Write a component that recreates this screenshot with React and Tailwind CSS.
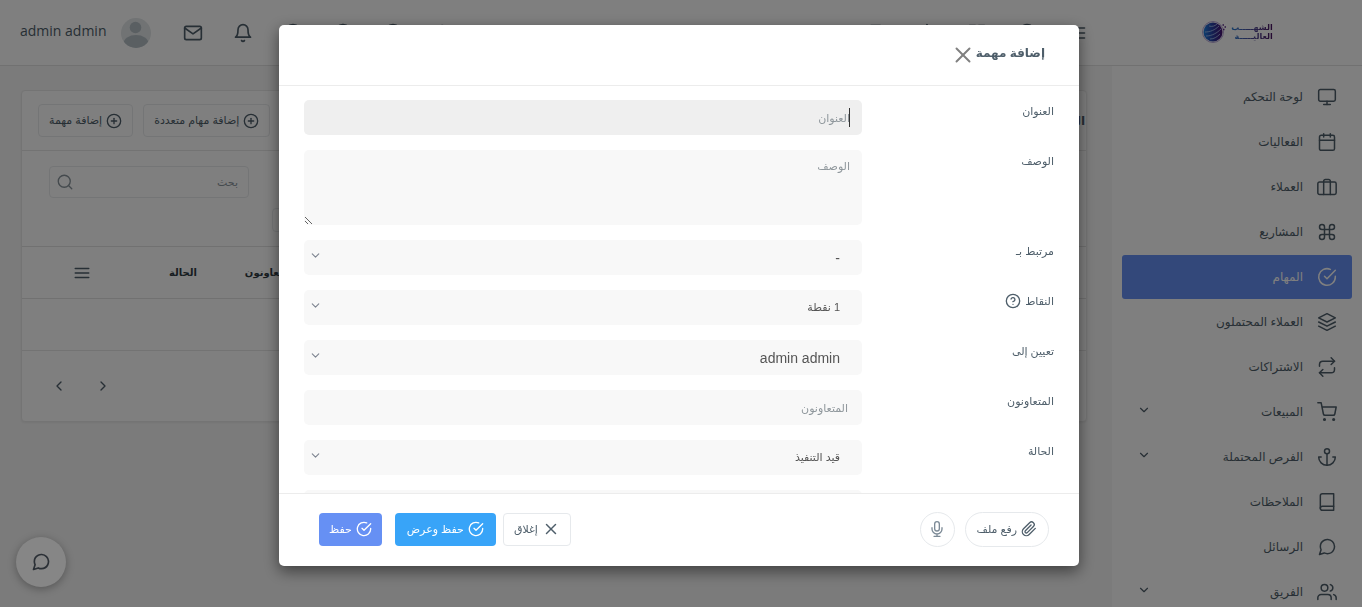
import {
  FiAnchor, FiBell, FiBook, FiCalendar, FiCheckCircle, FiCheckSquare, FiChevronDown, FiChevronLeft,
  FiChevronRight, FiClock, FiCommand, FiGlobe, FiGrid, FiHelpCircle, FiLayers, FiMail, FiMenu,
  FiMessageCircle, FiMonitor, FiPaperclip, FiPlusCircle, FiRepeat, FiSearch, FiShoppingCart,
  FiStar, FiUsers, FiX,
} from "react-icons/fi";

const navItems = [
  { label: "لوحة التحكم", icon: FiMonitor },
  { label: "الفعاليات", icon: FiCalendar },
  { label: "العملاء", icon: BriefcaseIcon },
  { label: "المشاريع", icon: FiCommand },
  { label: "المهام", icon: FiCheckCircle, active: true },
  { label: "العملاء المحتملون", icon: FiLayers },
  { label: "الاشتراكات", icon: FiRepeat },
  { label: "المبيعات", icon: FiShoppingCart, expandable: true },
  { label: "الفرص المحتملة", icon: FiAnchor, expandable: true },
  { label: "الملاحظات", icon: FiBook },
  { label: "الرسائل", icon: FiMessageCircle },
  { label: "الفريق", icon: FiUsers, expandable: true },
];

function BriefcaseIcon({ size = 20, strokeWidth = 2 }) {
  return (
    <svg width={size} height={size} viewBox="0 0 24 24" fill="none" stroke="currentColor" strokeWidth={strokeWidth} strokeLinecap="round" strokeLinejoin="round">
      <rect x="1" y="6" width="22" height="15" rx="2" />
      <path d="M16 21V5a2 2 0 0 0-2-2h-4a2 2 0 0 0-2 2v16" />
    </svg>
  );
}

function MicIcon() {
  return (
    <svg width="16" height="16" viewBox="0 0 24 24" fill="none" stroke="currentColor" strokeWidth="2" strokeLinecap="round" strokeLinejoin="round">
      <rect x="8.5" y="1" width="7" height="14" rx="3.5" />
      <path d="M4.500 10v2a7.500 7.500 0 0 0 15 0v-2M12 19.500V23M7.500 23h9" />
    </svg>
  );
}

function Avatar() {
  return (
    <svg width="30" height="30" viewBox="0 0 30 30">
      <defs>
        <clipPath id="avatar-clip"><circle cx="15" cy="15" r="15" /></clipPath>
      </defs>
      <g clipPath="url(#avatar-clip)">
        <rect width="30" height="30" fill="#e2e6e8" />
        <circle cx="14.500" cy="9.500" r="5.800" fill="#b4bec5" />
        <ellipse cx="15" cy="25.500" rx="12.500" ry="8.500" fill="#b4bec5" />
      </g>
    </svg>
  );
}

function Logo() {
  return (
    <a href="#" className="flex items-center gap-1" aria-label="الشهب العالية">
      <span className="flex flex-col bg-gradient-to-l from-[#4a1060] to-[#1f7ad0] bg-clip-text text-[8px] leading-[9px] font-bold text-transparent">
        <span>الشهـــــب</span>
        <span>العاليـــــة</span>
      </span>
      <svg width="26" height="24" viewBox="0 0 26 24">
        <defs>
          <linearGradient id="globe" x1="0" x2="1">
            <stop offset="0" stopColor="#1d7fe0" />
            <stop offset="0.500" stopColor="#2a3ca0" />
            <stop offset="1" stopColor="#4a1070" />
          </linearGradient>
        </defs>
        <circle cx="12" cy="12" r="10.500" fill="none" stroke="#b9a9d8" strokeWidth="1" />
        <circle cx="12" cy="12" r="9.500" fill="url(#globe)" />
        <path d="M4 12c5 0 10-2 14-6M5 16c6 0 11-3 15-7M8 6c3 1 6 0 8-2M9 19c4 0 7-2 10-5" stroke="#a9c4ee" strokeWidth="0.800" fill="none" />
        <path d="M21.500 5h1.500M23.500 7h1.500M22 9.500h1.500" stroke="#5b2b88" strokeWidth="1.500" fill="none" />
      </svg>
    </a>
  );
}

function IconButton({ icon: Icon, label }) {
  return (
    <button type="button" aria-label={label} className="flex w-[50px] justify-center">
      <Icon size={20} />
    </button>
  );
}

function TopBar() {
  return (
    <header className="flex h-[66px] shrink-0 items-center justify-between border-b border-[#e2e2e2] bg-white text-[#4e5e6a]">
      <div className="flex items-center">
        <div className="flex w-[250px] justify-center pb-0.5"><Logo /></div>
        <div className="flex pr-2.5">
          <IconButton icon={FiMenu} label="القائمة" />
          <IconButton icon={FiCheckCircle} label="المهام" />
          <IconButton icon={FiGrid} label="المشاريع" />
          <IconButton icon={FiStar} label="المفضلة" />
          <IconButton icon={FiCheckSquare} label="قائمة المهام" />
        </div>
      </div>
      <div className="flex items-center">
        <IconButton icon={FiSearch} label="بحث" />
        <IconButton icon={FiPlusCircle} label="إضافة" />
        <IconButton icon={FiGlobe} label="اللغة" />
        <IconButton icon={FiClock} label="الوقت" />
        <IconButton icon={FiBell} label="التنبيهات" />
        <IconButton icon={FiMail} label="البريد" />
        <a href="#" className="flex items-center gap-3.5 pr-[17px] pl-5 text-sm">
          <Avatar />
          <span className="pb-1 font-['Open_Sans',sans-serif]">admin admin</span>
        </a>
      </div>
    </header>
  );
}

function Sidebar() {
  return (
    <nav className="flex w-[250px] shrink-0 flex-col gap-px bg-white px-2.5 pt-[9px] text-[#4e5e6a]">
      {navItems.map(({ label, icon: Icon, active, expandable }) => (
        <a
          key={label}
          href="#"
          className={`flex h-11 shrink-0 items-center gap-3.5 rounded-[3px] px-[15px] text-xs ${active ? "bg-[#6690f4] text-white" : ""}`}
        >
          <Icon size={20} strokeWidth={1.8} />
          <span className="flex-1">{label}</span>
          {expandable && <span className="pb-1"><FiChevronDown size={14} /></span>}
        </a>
      ))}
    </nav>
  );
}

function AddButton({ children }) {
  return (
    <button type="button" className="flex h-[33px] items-center gap-1 rounded border border-[#e9ebed] px-2.5 text-[11px]">
      <FiPlusCircle size={16} />
      {children}
    </button>
  );
}

function TasksCard() {
  return (
    <section className="mt-6 mr-[25px] ml-[21px] rounded border border-[#e9e9e9] bg-white text-[#4e5e6a] shadow-xs">
      <div className="flex h-[60px] items-center justify-between border-b border-[#e6e6e6] pr-px pl-4">
        <h1 className="text-xs font-bold">المهام</h1>
        <div className="flex gap-2.5">
          <AddButton>إضافة مهام متعددة</AddButton>
          <AddButton>إضافة مهمة</AddButton>
        </div>
      </div>
      <div className="flex h-[95px] flex-col items-end gap-2.5 pt-[15px] pl-[27px]">
        <label className="flex h-8 w-[200px] items-center rounded border border-[#e9ebed] pr-2.5 pl-1.5">
          <input type="search" placeholder="بحث" className="w-full min-w-0 bg-transparent text-[11px] outline-none placeholder:text-[#8a959c]" />
          <span className="text-[#8a959c]"><FiSearch size={18} strokeWidth={1.8} /></span>
        </label>
        <div className="ml-[223px] h-6 w-40 rounded-sm border border-[#e9ebed]" />
      </div>
      <table className="w-full table-fixed text-right text-[10px]">
        <thead>
          <tr className="h-[52px] border-y border-[#e2e2e2] text-[#2f3a42]">
            <th className="w-auto" />
            <th className="w-[100px]">المتعاونون</th>
            <th className="w-[55px]">الحالة</th>
            <th className="w-[120px] text-[#4e5e6a]">
              <span className="flex justify-center"><FiMenu size={18} /></span>
            </th>
          </tr>
        </thead>
        <tbody>
          <tr className="h-[52px] border-b border-[#e6e6e6]"><td colSpan={4} /></tr>
        </tbody>
      </table>
      <div className="flex h-[70px] items-center justify-end gap-7 pl-[29px]">
        <button type="button" aria-label="السابق"><FiChevronRight size={16} /></button>
        <button type="button" aria-label="التالي"><FiChevronLeft size={16} /></button>
      </div>
    </section>
  );
}

const fieldClass = "block w-full rounded-[5px] bg-[#f8f8f8] outline-none placeholder:text-[#8f979c]";

function Field({ id, label, help, children }) {
  return (
    <div className="flex">
      <label htmlFor={id} className="flex h-[22px] w-48 shrink-0 items-center gap-1 text-[11px]">
        {label}
        {help && <FiHelpCircle size={16} />}
      </label>
      <div className="relative min-w-0 flex-1">{children}</div>
    </div>
  );
}

function SelectField({ id, label, help, option, textSize = "text-sm" }) {
  return (
    <Field id={id} label={label} help={help}>
      <select id={id} className={`${fieldClass} h-[35px] appearance-none pr-[22px] pl-8 ${textSize} text-[#555]`}>
        <option>{option}</option>
      </select>
      <span className="pointer-events-none absolute top-[9px] left-[5px] text-[#7d8490]"><FiChevronDown size={13} /></span>
    </Field>
  );
}

function TaskModal() {
  return (
    <div className="fixed inset-0 z-10 flex items-start justify-center bg-black/50 pt-[25px] pr-5 pl-4">
      <div role="dialog" aria-modal="true" aria-labelledby="modal-title" className="flex max-h-[calc(100vh-66px)] w-[800px] flex-col rounded-[5px] bg-white text-[#4e5e6a] shadow-[0_5px_15px_rgba(0,0,0,0.5)]">
        <div className="flex h-[61px] shrink-0 items-center border-b border-[#ececec] pr-[34px]">
          <h2 id="modal-title" className="pb-1 text-xs font-bold">إضافة مهمة</h2>
          <button type="button" aria-label="إغلاق النافذة" className="text-[#808080]"><FiX size={26} strokeWidth={1.8} /></button>
        </div>
        <form className="flex min-h-0 flex-1 flex-col gap-[15px] overflow-hidden px-[25px] pt-3.5">
          <Field id="title" label="العنوان">
            <input id="title" type="text" placeholder="العنوان" className="block h-[35px] w-full rounded-[5px] bg-[#efefef] px-3 text-[11px] outline-none placeholder:text-[#8f979c]" />
            <span className="absolute top-2 right-3 h-[19px] w-px bg-[#333]" />
          </Field>
          <Field id="description" label="الوصف">
            <textarea id="description" placeholder="الوصف" className={`${fieldClass} h-[75px] resize-y px-3 py-2 text-[11px]`} />
          </Field>
          <SelectField id="related" label="مرتبط بـ" option="-" />
          <SelectField id="points" label="النقاط" help option="1 نقطة" textSize="text-[11px]" />
          <SelectField id="assignee" label="تعيين إلى" option="admin admin" />
          <Field id="collaborators" label="المتعاونون">
            <input id="collaborators" type="text" placeholder="المتعاونون" className={`${fieldClass} h-[35px] px-3.5 text-[11px]`} />
          </Field>
          <SelectField id="status" label="الحالة" option="قيد التنفيذ" textSize="text-[11px]" />
          <Field id="extra" label="">
            <input id="extra" type="text" className={`${fieldClass} h-[35px]`} />
          </Field>
        </form>
        <div className="flex h-[73px] shrink-0 items-center justify-between border-t border-[#ececec] pr-[30px] pb-0.5 pl-10 text-[11px]">
          <div className="flex gap-2.5">
            <button type="button" className="flex h-[35px] items-center gap-1 rounded-full border border-[#e6e9ec] px-[11px]">
              <FiPaperclip size={16} />
              رفع ملف
            </button>
            <button type="button" aria-label="تسجيل صوتي" className="flex size-[35px] items-center justify-center rounded-full border border-[#e6e9ec] text-[#7c8a96]">
              <MicIcon />
            </button>
          </div>
          <div className="flex">
            <button type="button" className="flex h-[33px] items-center gap-1 rounded border border-[#e6e9ec] px-2.5">
              <FiX size={18} />
              إغلاق
            </button>
            <button type="button" className="mr-[7px] flex h-[33px] items-center gap-1 rounded bg-[#38a4f8] px-3 text-white">
              <FiCheckCircle size={16} />
              حفظ وعرض
            </button>
            <button type="button" className="mr-[13px] flex h-[33px] items-center gap-1 rounded bg-[#6690f4] px-2.5 text-white">
              <FiCheckCircle size={16} />
              حفظ
            </button>
          </div>
        </div>
      </div>
    </div>
  );
}

export default function App() {
  return (
    <div dir="rtl" lang="ar" className="flex h-screen flex-col overflow-hidden bg-[#f6f6f6] font-['Liberation_Sans','DejaVu_Sans',sans-serif]">
      <TopBar />
      <div className="flex min-h-0 flex-1">
        <Sidebar />
        <main className="min-w-0 flex-1"><TasksCard /></main>
      </div>
      <TaskModal />
      <button type="button" aria-label="المحادثة" className="fixed bottom-5 left-4 z-20 flex size-[50px] items-center justify-center rounded-full bg-[#868686] text-[#2b3036] shadow-[0_2px_8px_rgba(0,0,0,0.3)]">
        <FiMessageCircle size={20} />
      </button>
    </div>
  );
}
